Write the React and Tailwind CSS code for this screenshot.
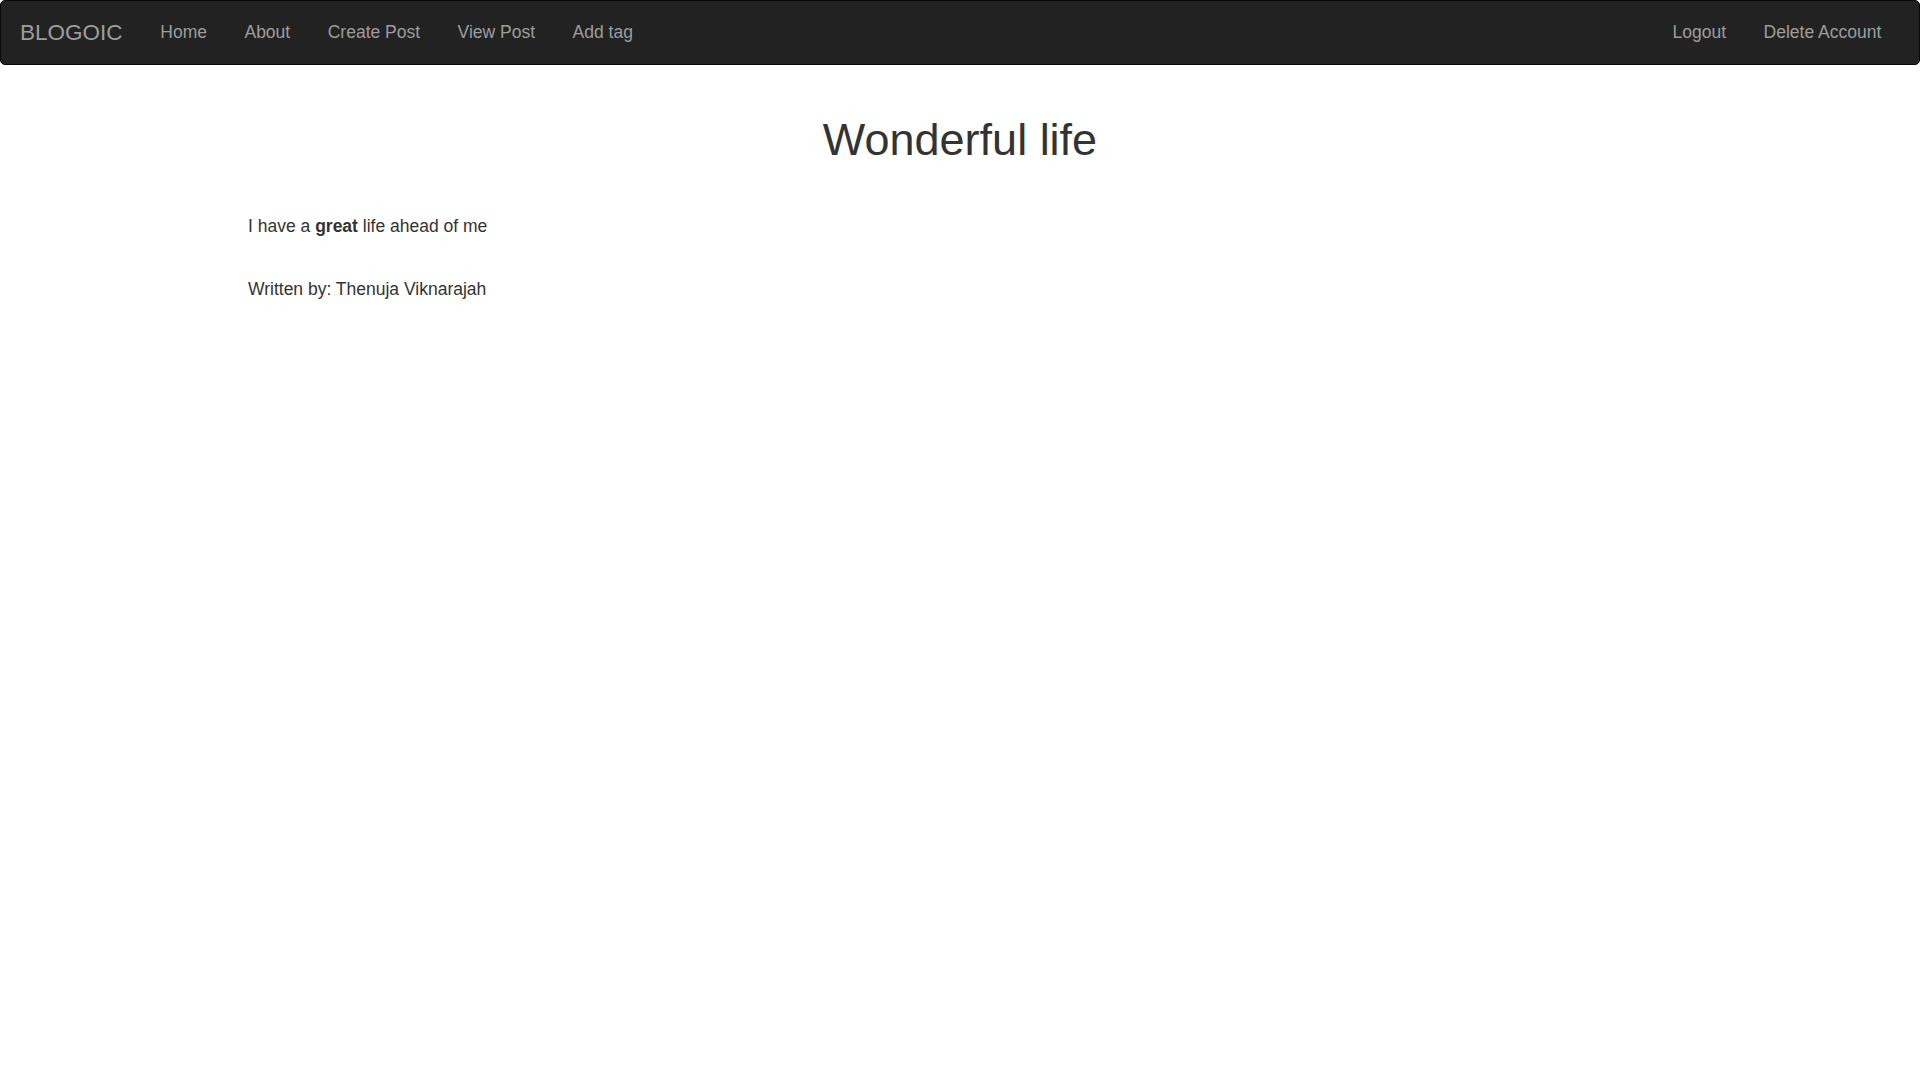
import React from "react";

export default function App() {
  return (
    <div className="min-h-[1080px] bg-white text-[#333] font-['Liberation_Sans',Arial,sans-serif]">
      <nav className="h-[65px] bg-[#222] border border-[#080808] rounded-[5px] flex items-center justify-between px-[19px]">
        <div className="flex items-center h-full">
          <a className="-ml-[19px] px-[19px] text-[22.5px] leading-[25px] text-[#9d9d9d]">BLOGOIC</a>
          {["Home", "About", "Create Post", "View Post", "Add tag"].map((l) => (
            <a key={l} className="px-[18.75px] text-[17.5px] leading-[25px] text-[#9d9d9d]">{l}</a>
          ))}
        </div>
        <div className="flex items-center h-full">
          {["Logout", "Delete Account"].map((l) => (
            <a key={l} className="px-[18.75px] text-[17.5px] leading-[25px] text-[#9d9d9d]">{l}</a>
          ))}
        </div>
      </nav>
      <div className="w-[1462px] mx-auto px-[19px] pt-[25px]">
        <h1 className="mt-[25px] mb-[12px] text-[45px] leading-[50px] text-center text-[#333]">Wonderful life</h1>
        <div className="mt-[49px] text-[17.5px] leading-[25px]">
          <p className="mb-[12px]">I have a <strong className="font-bold">great</strong> life ahead of me</p>
          <p className="mt-[38px]">Written by: Thenuja Viknarajah</p>
        </div>
      </div>
    </div>
  );
}
